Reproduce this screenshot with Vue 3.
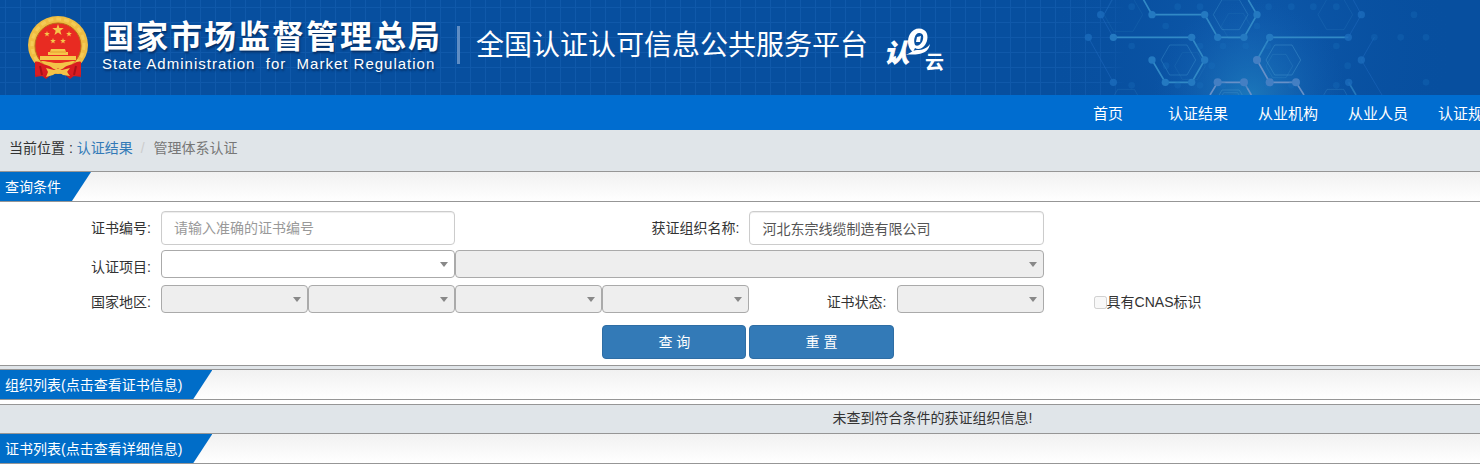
<script setup>
import { ref } from 'vue';

const menus = ['首页', '认证结果', '从业机构', '从业人员', '认证规则'];

const certNo = ref('');
const orgName = ref('河北东宗线缆制造有限公司');
const regions = ['国家', '省', '市', '区县'];

// header pattern
const hexagons = [
  { x: 445, y: 180, r: 52, o: 0.4 },
  { x: 602, y: 44, r: 52, o: 0.4 },
  { x: 760, y: 180, r: 52, o: 0.5 },
  { x: 748, y: 198, r: 40, o: 0.25 },
  { x: 480, y: 198, r: 46, o: 0.15 },
  { x: 618, y: 78, r: 44, o: 0.15 },
  { x: 916, y: 44, r: 52, o: 0.18 },
  { x: 280, y: 44, r: 58, o: 0.15 },
  { x: 602, y: 315, r: 52, o: 0.5 },
  { x: 602, y: 315, r: 42, o: 0.4 },
  { x: 916, y: 312, r: 50, o: 0.3 },
  { x: 288, y: 312, r: 50, o: 0.2 },
];
const dots = [
  [366, 44], [524, 44], [681, 44], [250, 112], [485, 112], [563, 112], [642, 112],
  [719, 112], [366, 180], [524, 180], [681, 180], [406, 247], [485, 247],
];
const brightDots = [[563, 247], [642, 247], [719, 247], [798, 247], [681, 180]];
const midDots = [[955, 112], [994, 180], [956, 247], [250, 247], [994, 44], [175, 112], [212, 44]];
const faintDots = [
  [305, 20], [443, 20], [510, 20], [716, 20], [784, 20], [850, 20], [919, 20], [407, 78], [681, 78],
  [510, 138], [579, 138], [647, 138], [714, 138], [919, 138], [545, 197], [408, 197], [443, 256],
  [510, 256], [579, 256], [647, 256], [714, 256], [784, 256], [919, 256], [305, 256], [305, 138],
  [1033, 112], [1112, 112], [1188, 112], [1152, 44], [1188, 247], [953, 197],
];

function hexPoints({ x, y, r }) {
  const h = Math.round(r * 0.87);
  const w = r / 2;
  return `${x - r},${y} ${x - w},${y - h} ${x + w},${y - h} ${x + r},${y} ${x + w},${y + h} ${x - w},${y + h}`;
}

function reset() {
  certNo.value = '';
  orgName.value = '';
}
</script>

<template>
  <div class="page">
    <header class="banner">
      <svg class="banner-pattern" viewBox="0 0 1350 285" aria-hidden="true">
        <defs>
          <radialGradient id="glow" gradientUnits="userSpaceOnUse" cx="660" cy="290" r="290">
            <stop offset="0" stop-color="#2080c0" stop-opacity="0.8" />
            <stop offset="1" stop-color="#1460b4" stop-opacity="0" />
          </radialGradient>
          <radialGradient id="haze" gradientUnits="userSpaceOnUse" cx="660" cy="140" r="600">
            <stop offset="0" stop-color="#1463b5" stop-opacity="0.6" />
            <stop offset="1" stop-color="#0b50a2" stop-opacity="0" />
          </radialGradient>
        </defs>
        <rect width="1350" height="285" fill="url(#haze)" />
        <rect width="1350" height="285" fill="url(#glow)" />
        <g fill="none" stroke="#3f92cc" stroke-width="3">
          <polygon v-for="(h, i) in hexagons" :key="i" :points="hexPoints(h)" :opacity="h.o" />
        </g>
        <g fill="none" stroke="#1c66bb" stroke-width="3" opacity="0.6">
          <path d="M175 112 250 247M212 44 250 112M222 44 245 0M994 180 1033 112M994 180 1056 285M994 44 970 0M994 44 955 112" />
        </g>
        <g fill="none" stroke="#3189c6" stroke-width="5">
          <path d="M340 -2 366 44H524L563 112H642L681 44 655 0" />
          <path d="M250 112H485L524 180 485 247H406L366 180" />
          <path d="M955 112H719L681 180" />
          <path d="M956 247 978 285" opacity="0.7" />
        </g>
        <path d="M681 180 719 247H798L822 285M540 285 563 247H642L664 285" fill="none" stroke="#6790c8" stroke-width="5" />
        <circle v-for="(d, i) in faintDots" :key="'f' + i" :cx="d[0]" :cy="d[1]" r="10" fill="#1c70bd" opacity="0.3" />
        <circle v-for="(d, i) in midDots" :key="'m' + i" :cx="d[0]" :cy="d[1]" r="11" fill="#1b6bbb" opacity="0.8" />
        <circle v-for="(d, i) in dots" :key="'d' + i" :cx="d[0]" :cy="d[1]" r="11" fill="#2479c1" />
        <circle v-for="(d, i) in brightDots" :key="'b' + i" :cx="d[0]" :cy="d[1]" r="12" fill="#447fc3" />
      </svg>

      <svg class="emblem" viewBox="0 0 60 64" role="img" aria-label="国徽">
        <path d="M9 43 7 61 14 60 18 63 24 58H36L42 63 46 60 53 61 51 43Z" fill="#cf1a20" />
        <ellipse cx="30" cy="29" rx="30" ry="29" fill="#efbd42" />
        <circle cx="30" cy="29" r="26" fill="none" stroke="#f5cb56" stroke-width="3" stroke-dasharray="5 3" />
        <circle cx="30" cy="30" r="23" fill="#e82b22" stroke="#bd6c18" />
        <g fill="#f6c64a">
          <polygon id="star" points="30,8 31.4,12.1 35.7,12.1 32.3,14.8 33.5,19 30,16.5 26.5,19 27.7,14.8 24.3,12.1 28.6,12.1" />
          <use href="#star" transform="translate(4 11) scale(.5)" />
          <use href="#star" transform="translate(26 11) scale(.5)" />
          <use href="#star" transform="translate(10 18) scale(.5)" />
          <use href="#star" transform="translate(20 18) scale(.5)" />
          <path d="M23 33H37L38 36H40V39H20V36H22Z" />
          <path d="M12 40H48V44H12Z" />
        </g>
        <path d="M22 36H38" stroke="#e79a2c" />
        <path d="M7 46C11 44 15 50 21 49L30 52 39 49C45 50 49 44 53 46L53 59C50 58 48 62 43 59L38 55H22L17 59C12 62 10 58 7 59Z" fill="#d91c21" />
        <path d="M12 50 14 59M48 50 46 59" stroke="#a91018" stroke-width="2" />
        <path d="M13 45C19 45 23 47 30 47S41 45 47 45C45 49 40 49 37 51Q33 55 30 52Q27 55 23 51C20 49 15 49 13 45Z" fill="#f3c348" />
        <path d="M18 52 26 54Q30 51 34 54L42 52 39 56 42 60 35 59 32 57H28L25 59 18 61 20 56Z" fill="#f3c348" />
      </svg>

      <div class="agency">
        <strong class="agency-cn">国家市场监督管理总局</strong>
        <span class="agency-en">State Administration&nbsp; for&nbsp; Market Regulation</span>
      </div>
      <h1 class="platform">全国认证认可信息公共服务平台</h1>
      <svg class="cloud-logo" viewBox="0 0 64 48" role="img" aria-label="认e云">
        <text class="logo-ren" x="0" y="37">认</text>
        <path fill-rule="evenodd" d="M29 27C23 23 23 14 26 9C29 4 35 2 40 5C45 8 44 16 41 20C38 24 34 25 31 23ZM31 20C34 22 38 19 39 14C40 10 38 8 35 8C31 8 29 15 31 20Z" fill="#fff" />
        <path d="M33 12 37 11 36 17 32 17Z" fill="#fff" />
        <path d="M21 30C26 29 28 25 33 25C39 25 43 23 46 19C45 25 41 28 35 29C30 30 26 29 21 30Z" fill="#fff" />
        <text class="logo-yun" x="41" y="44">云</text>
      </svg>
    </header>

    <nav class="navbar">
      <a v-for="m in menus" :key="m" href="#" class="navbar-link">{{ m }}</a>
    </nav>

    <div class="crumbs">
      <span>当前位置 :&nbsp;</span>
      <a href="#">认证结果</a>
      <span class="slash">/</span>
      <span class="current">管理体系认证</span>
    </div>

    <section class="panel">
      <div class="panel-title"><h2>查询条件</h2></div>
      <form class="query" @submit.prevent>
        <div class="row">
          <label for="cert-no">证书编号:</label>
          <input id="cert-no" v-model="certNo" type="text" class="text-input span-2" placeholder="请输入准确的证书编号">
          <label for="org-name" class="span-2">获证组织名称:</label>
          <input id="org-name" v-model="orgName" type="text" class="text-input span-2">
        </div>
        <div class="row">
          <label for="project">认证项目:</label>
          <span class="select-box span-2"><select id="project"></select></span>
          <span class="select-box span-4"><select aria-label="认证项目明细" disabled></select></span>
        </div>
        <div class="row">
          <label for="region-0">国家地区:</label>
          <span v-for="(r, i) in regions" :key="r" class="select-box">
            <select :id="'region-' + i" :aria-label="r" disabled></select>
          </span>
          <label for="status">证书状态:</label>
          <span class="select-box"><select id="status" disabled></select></span>
          <label for="cnas" class="check"><input id="cnas" type="checkbox" disabled>具有CNAS标识</label>
        </div>
        <div class="row buttons">
          <button type="submit" class="btn first">查 询</button>
          <button type="button" class="btn" @click="reset">重 置</button>
        </div>
      </form>
    </section>

    <section class="panel org-panel">
      <div class="panel-title"><h2>组织列表(点击查看证书信息)</h2></div>
      <p class="empty">未查到符合条件的获证组织信息!</p>
    </section>

    <section class="panel">
      <div class="panel-title"><h2>证书列表(点击查看详细信息)</h2></div>
    </section>
  </div>
</template>

<style>
body {
  margin: 0;
  background: #fff;
}
</style>

<style scoped>
.page {
  overflow: hidden;
  font: 14px/20px "Liberation Sans", "Noto Sans CJK SC", sans-serif;
  color: #333;
}

.page * {
  box-sizing: border-box;
}

/* header */
.banner {
  position: relative;
  display: flex;
  height: 95px;
  padding-left: 28px;
  color: #fff;
  background-color: #074f9f;
  background-image:
    linear-gradient(90deg, transparent 75%, #074f9f 76%),
    linear-gradient(#1059aa 1px, transparent 1px),
    linear-gradient(90deg, #1059aa 1px, transparent 1px);
  background-size: 100% 100%, 15px 15px, 15px 15px;
  background-position: 0 0, 0 7px, 5px 0;
}

.banner-pattern {
  position: absolute;
  top: 0;
  right: 0;
  width: 450px;
  height: 95px;
}

.emblem {
  flex: none;
  width: 60px;
  height: 64px;
  margin-top: 16px;
}

.agency {
  display: flex;
  flex-direction: column;
  flex: none;
  width: 358px;
  height: 38px;
  margin: 26px 0 0 14px;
  padding-top: 2px;
  border-right: 3px solid #5f8dc4;
  justify-content: center;
  white-space: nowrap;
  text-shadow: 1px 2px 2px #052f66;
}

.agency-cn {
  font-size: 32px;
  line-height: 36px;
  letter-spacing: 2px;
}

.agency-en {
  font-size: 15px;
  line-height: 18px;
  letter-spacing: 1px;
}

.platform {
  margin: 26px 16px 0;
  font-size: 28px;
  font-weight: 400;
  line-height: 40px;
  white-space: nowrap;
}

.cloud-logo {
  flex: none;
  width: 64px;
  height: 48px;
  margin-top: 25px;
  overflow: visible;
}

.cloud-logo text {
  fill: #fff;
  font-weight: 700;
}

.logo-ren {
  font-size: 25px;
  font-style: italic;
  stroke: #fff;
  stroke-width: 1px;
}

.logo-yun {
  font-size: 19px;
}

.navbar {
  display: flex;
  justify-content: flex-end;
  height: 35px;
  margin-right: -33px;
  background: #006dd0;
}

.navbar-link {
  width: 90px;
  font-size: 15px;
  line-height: 37px;
  text-align: center;
  color: #fff;
  text-decoration: none;
}

.crumbs {
  display: flex;
  height: 41px;
  padding: 8px 9px;
  background: #e0e5e9;
}

.crumbs a {
  color: #337ab7;
  text-decoration: none;
}

.slash {
  padding: 0 9px 0 8px;
  color: #ccc;
}

.current {
  color: #777;
}

/* panels */
.panel-title {
  display: flex;
  border-top: 1px solid #969696;
  border-bottom: 1px solid #969696;
  background: linear-gradient(#f1f1f1, #fff);
}

.panel-title h2 {
  margin: 0;
  padding: 1px 30px 0 5px;
  font-size: 14px;
  font-weight: 400;
  line-height: 28px;
  color: #fff;
  background: #006dc8;
  clip-path: polygon(0 0, 100% 0, calc(100% - 19px) 100%, 0 100%);
}

.query {
  display: flex;
  flex-direction: column;
  gap: 5px;
  padding: 9px 0 6px;
  border-bottom: 1px solid #969696;
}

.row {
  display: grid;
  grid-template-columns: 161px repeat(6, 149fr) 442fr;
  align-items: start;
  min-height: 30px;
}

.row label {
  padding: 7px 10px 0 0;
  text-align: right;
}

.row .check {
  display: flex;
  align-items: center;
  padding-left: 50px;
}

.check input {
  width: 13px;
  height: 13px;
  margin: 0;
}

.span-2 {
  grid-column: span 2;
}

.span-4 {
  grid-column: span 4;
}

.text-input {
  min-width: 0;
  height: 34px;
  padding: 6px 12px;
  font: inherit;
  color: #555;
  border: 1px solid #ccc;
  border-radius: 4px;
  box-shadow: inset 0 1px 1px rgba(0, 0, 0, 0.075);
}

.text-input::placeholder {
  color: #999;
  opacity: 1;
}

.select-box {
  position: relative;
}

.select-box select {
  display: block;
  width: 100%;
  height: 28px;
  appearance: none;
  background: #fff;
  border: 1px solid #aaa;
  border-radius: 4px;
  opacity: 1;
}

.select-box select:disabled {
  background: #eee;
}

.select-box::after {
  content: "";
  position: absolute;
  top: 12px;
  right: 7px;
  border: 4px solid transparent;
  border-top: 5px solid #888;
  border-bottom: 0;
  pointer-events: none;
}

.buttons {
  padding-top: 5px;
}

.btn {
  height: 34px;
  margin-right: 3px;
  padding: 0;
  font: inherit;
  font-size: 14px;
  color: #fff;
  background: #337ab7;
  border: 1px solid #2e6da4;
  border-radius: 4px;
  cursor: pointer;
}

.btn.first {
  grid-column-start: 5;
}

.org-panel {
  padding-top: 3px;
  background: #e0e5e9;
}

.empty {
  margin: 4px 0 0;
  padding: 3px 0 5px 26%;
  text-align: center;
  border-top: 1px solid #969696;
  box-shadow: 0 -4px #fff;
}
</style>
